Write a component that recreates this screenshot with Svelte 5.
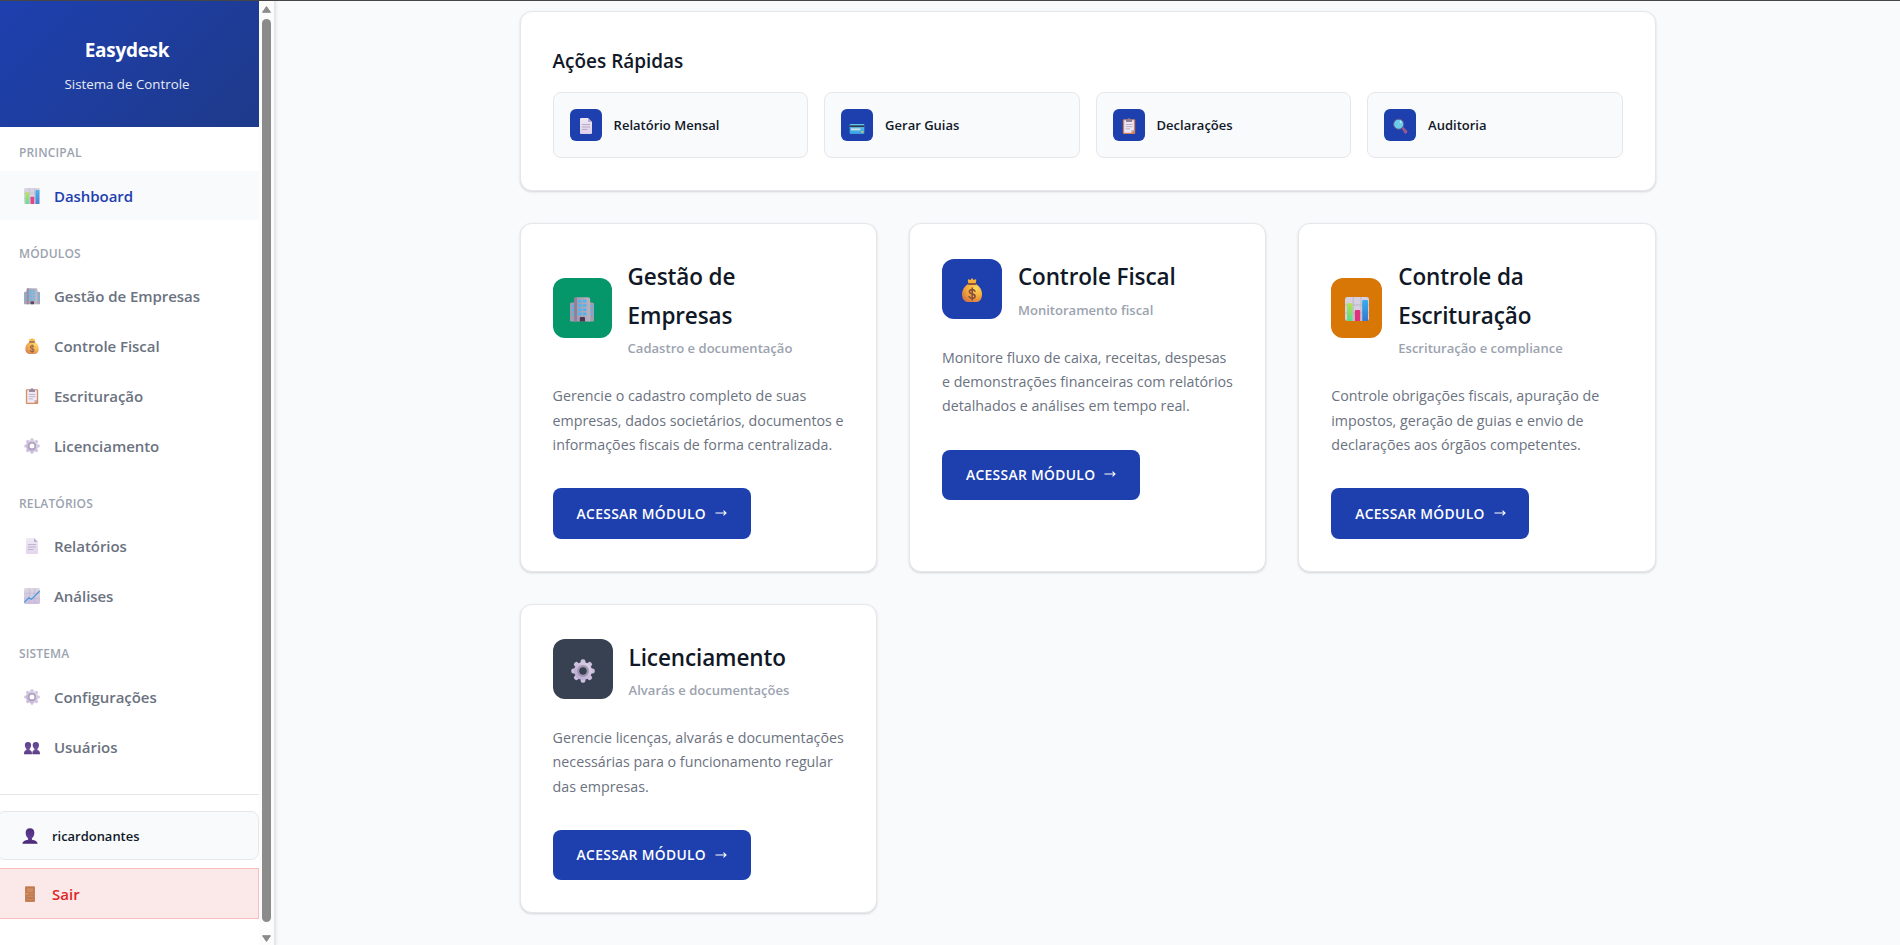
<script>
  const sections = [
    { title: 'PRINCIPAL', items: [{ icon: 'chart', label: 'Dashboard', active: true }] },
    {
      title: 'MÓDULOS',
      items: [
        { icon: 'building', label: 'Gestão de Empresas' },
        { icon: 'money', label: 'Controle Fiscal' },
        { icon: 'clipboard', label: 'Escrituração' },
        { icon: 'gear', label: 'Licenciamento' }
      ]
    },
    {
      title: 'RELATÓRIOS',
      items: [
        { icon: 'page', label: 'Relatórios' },
        { icon: 'trend', label: 'Análises' }
      ]
    },
    {
      title: 'SISTEMA',
      items: [
        { icon: 'gear', label: 'Configurações' },
        { icon: 'users', label: 'Usuários' }
      ]
    }
  ];

  const quick = [
    { icon: 'page', label: 'Relatório Mensal' },
    { icon: 'card', label: 'Gerar Guias' },
    { icon: 'clipboard', label: 'Declarações' },
    { icon: 'search', label: 'Auditoria' }
  ];

  const modules = [
    {
      icon: 'building', tone: 'green',
      title: ['Gestão de', 'Empresas'],
      sub: 'Cadastro e documentação',
      text: ['Gerencie o cadastro completo de suas', 'empresas, dados societários, documentos e', 'informações fiscais de forma centralizada.']
    },
    {
      icon: 'money', tone: 'blue',
      title: ['Controle Fiscal'],
      sub: 'Monitoramento fiscal',
      text: ['Monitore fluxo de caixa, receitas, despesas', 'e demonstrações financeiras com relatórios', 'detalhados e análises em tempo real.']
    },
    {
      icon: 'chart', tone: 'orange',
      title: ['Controle da', 'Escrituração'],
      sub: 'Escrituração e compliance',
      text: ['Controle obrigações fiscais, apuração de', 'impostos, geração de guias e envio de', 'declarações aos órgãos competentes.']
    },
    {
      icon: 'gear', tone: 'slate',
      title: ['Licenciamento'],
      sub: 'Alvarás e documentações',
      text: ['Gerencie licenças, alvarás e documentações', 'necessárias para o funcionamento regular', 'das empresas.']
    }
  ];
</script>

{#snippet emoji(name)}
  <svg class="emoji" viewBox="0 0 24 24" aria-hidden="true">
    {#if name === 'chart'}
      <rect width="24" height="24" rx="2.4" fill="#d5cfdf" />
      <path d="M8.2 0V24M16 0V24M0 8H24M0 16H24" stroke="#b9b1c6" stroke-width=".9" />
      <path d="M2 7.2a1 1 0 0 1 1-1H6.600a1 1 0 0 1 1 1V24H2.400A2 2 0 0 1 2 23.900Z" fill="url(#g-green)" />
      <path d="M9.800 14a1 1 0 0 1 1-1H14.200a1 1 0 0 1 1 1V24H9.800Z" fill="#e0327c" />
      <path d="M17.200 4a1 1 0 0 1 1-1H22a1 1 0 0 1 1 1V24H17.200Z" fill="url(#g-blue)" />
    {:else if name === 'building'}
      <path d="M0 7a1.500 1.500 0 0 1 1.500-1.500H5V24.500H1a1 1 0 0 1-1-1ZM24 7a1.500 1.500 0 0 0-1.500-1.500H19V24.500H23a1 1 0 0 0 1-1Z" fill="#a49bb0" />
      <path d="M4 2.500A2.200 2.200 0 0 1 6.200.3H18A2.200 2.200 0 0 1 20.200 2.500V24.500H4Z" fill="url(#g-wall)" />
      <path d="M4 2.500A2.200 2.200 0 0 1 6.200.3H7V24.500H4Z" fill="#8c8299" />
      <path d="M8.300 3h3.300v2.600H8.300ZM13 3h3.300v2.600H13ZM8.300 7.200h3.300v2.600H8.300ZM13 7.200h3.300v2.600H13ZM8.300 11.400h3.300V14H8.300ZM13 11.400h3.300V14H13ZM8.300 15.600h3.300v2.600H8.300ZM13 15.600h3.300v2.600H13ZM1.800 8h1.800v2.500H1.800ZM1.800 12h1.800v2.500H1.800ZM1.800 16h1.800v2.500H1.800ZM21 8h1.800v2.500H21ZM21 12h1.800v2.500H21ZM21 16h1.800v2.500H21Z" fill="#42b9f5" />
      <path d="M9.800 24.500V21a1 1 0 0 1 1-1H14a1 1 0 0 1 1 1V24.500Z" fill="#4b3553" />
    {:else if name === 'money'}
      <path d="M8.500 6.200 7.800 2.300a.9.900 0 0 1 1.200-.9l1.600.5L11.500.5a.7.700 0 0 1 1.100 0l.9 1.400 1.600-.5a.9.900 0 0 1 1.200.9L15.600 6.200Z" fill="#f7b13b" />
      <path d="M8.500 5.800C4.500 8.200 2 12 2 16.200 2 21 4.500 24 8 24H16.200C19.700 24 22 21 22 16.200 22 12 19.600 8.200 15.600 5.800Z" fill="url(#g-gold)" />
      <rect x="7.600" y="5" width="9" height="2" rx="1" fill="#8e5740" />
      <path d="M14.900 13.200C14.500 12.100 13.500 11.600 12.200 11.600 10.500 11.600 9.400 12.400 9.400 13.700 9.400 16.700 15.100 15 15.100 18.200 15.100 19.500 13.900 20.400 12.200 20.400 10.600 20.400 9.500 19.700 9.100 18.500M12.200 10V22" fill="none" stroke="#8a5039" stroke-width="1.600" stroke-linecap="round" />
    {:else if name === 'clipboard'}
      <rect x="2.800" y="1.700" width="18.500" height="22.300" rx="1.500" fill="#cf8458" />
      <path d="M4.800 3.500H19.300V18L15.500 22H4.800Z" fill="#efe7f5" />
      <path d="M19.300 18H16.300a.8.800 0 0 0-.8.800V22Z" fill="#bfb2cc" />
      <path d="M7.200 9.700H17M7.200 13H17M7.200 16.300H13.500" stroke="#a9a0b8" stroke-width="1.200" />
      <path d="M7.500 5.300V3.200a1 1 0 0 1 1-1H10A2 2 0 0 1 14 2.200H15.600a1 1 0 0 1 1 1V5.300a.8.800 0 0 1-.8.800H8.300a.8.800 0 0 1-.8-.8Z" fill="#8b8198" />
    {:else if name === 'gear'}
      {#each [0, 45, 90, 135, 180, 225, 270, 315] as a}
        <rect x="9.600" y=".3" width="4.800" height="7" rx="2" fill="#cdbfdf" transform="rotate({a} 12 12)" />
      {/each}
      <circle cx="12" cy="12" r="6.600" fill="none" stroke="url(#g-gear)" stroke-width="4.800" />
      <circle cx="12" cy="12" r="4.900" fill="none" stroke="#a195b1" stroke-width="2.200" />
    {:else if name === 'page'}
      <path d="M3 1.500A1.500 1.500 0 0 1 4.500 0H15L21 6V22.500A1.500 1.500 0 0 1 19.500 24H4.500A1.500 1.500 0 0 1 3 22.500Z" fill="url(#g-page)" />
      <path d="M15 0 21 6H16.200A1.200 1.200 0 0 1 15 4.800Z" fill="#b8a9c9" />
      <path d="M6.500 9.800H17.500M6.500 13.500H17.500M6.500 17.200H13.500" stroke="#a9a0b8" stroke-width="1.200" stroke-linecap="round" />
    {:else if name === 'trend'}
      <rect width="24" height="24" rx="2.400" fill="url(#g-grid)" />
      <path d="M8 0V24M16 0V24M0 8H24M0 16H24" stroke="#b9adca" stroke-width=".9" />
      <path d="M.5 21.500 7.200 14.800 11.200 17 23.500 4.500" fill="none" stroke="#2f8fdb" stroke-width="1.900" />
    {:else if name === 'users'}
      <g fill="url(#g-user)">
        <path d="M6 4.500c3 0 4.700 1.900 4.700 4.600 0 2.400-.8 4.500-2.300 5.800v1.700c2.700.5 3.600 2.300 3.600 6.400H0c0-4.100.9-5.900 3.600-6.400v-1.700C2.100 13.600 1.300 11.500 1.300 9.100 1.300 6.400 3 4.500 6 4.500Z" />
        <path d="M17.700 4.500c3 0 4.800 1.900 4.800 4.600 0 2.400-.8 4.500-2.400 5.800v1.700c2.900.5 3.900 2.300 3.900 6.400H12.500c0-4.100.5-5.900 3.100-6.400v-1.700C14 13.600 13 11.500 13 9.100 13 6.400 14.700 4.500 17.700 4.500Z" />
      </g>
    {:else if name === 'user'}
      <path d="M12 .2c4.500 0 6.500 2.800 6.500 6.700 0 4.300-1.400 7-3.600 8.500v2.200c5.100.6 8.100 2.300 8.600 6.200H.5c.5-3.900 3.500-5.600 8.600-6.200v-2.200C6.900 13.900 5.500 11.200 5.500 6.900 5.500 3 7.500.2 12 .2Z" fill="url(#g-user)" />
    {:else if name === 'door'}
      <rect x="4.500" y=".5" width="15" height="23.500" rx="1.200" fill="#c98458" />
      <path d="M6.500 2.500H17.500V10H6.500ZM6.500 14H17.500V17H6.500ZM6.500 19H17.500V22H6.500Z" fill="#cf8a60" stroke="#b06f49" stroke-width=".8" />
      <path d="M5.500 11.700H9" stroke="#f2ae4a" stroke-width="1.200" />
    {:else if name === 'card'}
      <rect x="1" y="9" width="22" height="15" rx="1.500" fill="url(#g-card)" />
      <rect x="1" y="11" width="22" height="2.600" fill="#3d3447" />
      <rect x="3" y="15.500" width="14" height="3" fill="#c9dce8" />
      <rect x="18.500" y="19.500" width="3" height="2.600" rx=".5" fill="#e7c944" />
    {:else if name === 'search'}
      <path d="M14.500 15.500 17 13.500 22.500 19.300a2 2 0 0 1 0 2.700l-.8.800a2 2 0 0 1-2.800 0Z" fill="#9b5a8e" />
      <circle cx="10" cy="9.300" r="7.600" fill="#6ccdea" stroke="#63558a" stroke-width="1.500" />
      <ellipse cx="13" cy="6" rx="1.300" ry="1.800" fill="#b6effb" />
    {/if}
  </svg>
{/snippet}

<svg class="defs" width="0" height="0" aria-hidden="true">
  <defs>
    <linearGradient id="g-green" x1="0" y1="0" x2="0" y2="1"><stop stop-color="#b4e04f" /><stop offset="1" stop-color="#55dc92" /></linearGradient>
    <linearGradient id="g-blue" x1="0" y1="0" x2="0" y2="1"><stop stop-color="#34aef0" /><stop offset="1" stop-color="#3a77cf" /></linearGradient>
    <linearGradient id="g-wall"><stop stop-color="#9f96ab" /><stop offset="1" stop-color="#b9b2c0" /></linearGradient>
    <radialGradient id="g-gold" cx=".7" cy=".25" r=".9"><stop stop-color="#ffd75a" /><stop offset=".5" stop-color="#f5ab3e" /><stop offset="1" stop-color="#cf6e42" /></radialGradient>
    <linearGradient id="g-gear" x1="1" y1="0" x2="0" y2="1"><stop stop-color="#dad0e6" /><stop offset="1" stop-color="#bca9d3" /></linearGradient>
    <linearGradient id="g-page" x1="0" y1="0" x2="0" y2="1"><stop stop-color="#efe8f4" /><stop offset="1" stop-color="#dfd0ec" /></linearGradient>
    <linearGradient id="g-grid" x1="0" y1="0" x2="0" y2="1"><stop stop-color="#d8d3df" /><stop offset="1" stop-color="#c9b8dc" /></linearGradient>
    <linearGradient id="g-user" x1="0" y1="0" x2="0" y2="1"><stop stop-color="#4b2f7a" /><stop offset=".6" stop-color="#5f3c94" /><stop offset="1" stop-color="#472671" /></linearGradient>
    <linearGradient id="g-card" x1="0" y1="0" x2="0" y2="1"><stop stop-color="#58cdf0" /><stop offset="1" stop-color="#3b9ee2" /></linearGradient>
  </defs>
</svg>

<div class="page">
  <aside>
    <div class="side">
      <header>
        <h1>Easydesk</h1>
        <p>Sistema de Controle</p>
      </header>
      <nav>
        {#each sections as s}
          <section>
            <h2>{s.title}</h2>
            {#each s.items as item}
              <a class:active={item.active}>{@render emoji(item.icon)}<span>{item.label}</span></a>
            {/each}
          </section>
        {/each}
      </nav>
      <div class="foot">
        <div class="user">{@render emoji('user')}<span>ricardonantes</span></div>
        <div class="exit">{@render emoji('door')}<span>Sair</span></div>
      </div>
    </div>
    <div class="scroll">
      <svg viewBox="0 0 9 7"><path d="M4.500 0.600 8.500 6.300H.5Z" fill="#8b8b8b" stroke="#8b8b8b" stroke-linejoin="round" /></svg>
      <div class="thumb"></div>
      <svg viewBox="0 0 9 7"><path d="M4.500 6.400 8.500.7H.5Z" fill="#8b8b8b" stroke="#8b8b8b" stroke-linejoin="round" /></svg>
    </div>
  </aside>

  <main>
    <div class="card quick">
      <h2>Ações Rápidas</h2>
      <div class="quick-grid">
        {#each quick as q}
          <div class="action"><i>{@render emoji(q.icon)}</i><span>{q.label}</span></div>
        {/each}
      </div>
    </div>

    <div class="modules">
      {#each modules as m}
        <article class="card">
          <div class="head">
            <div class="tile {m.tone}">{@render emoji(m.icon)}</div>
            <div>
              <h3>{#each m.title as line}<span>{line}</span>{/each}</h3>
              <p class="sub">{m.sub}</p>
            </div>
          </div>
          <p class="text">{#each m.text as line}<span>{line}</span>{/each}</p>
          <button><span>ACESSAR MÓDULO</span><svg class="arrow" viewBox="0 0 12 8"><path d="M.5 4H11M8.500 1.700 11 4 8.500 6.300" fill="none" stroke="#fff" stroke-width="1.100" /></svg></button>
        </article>
      {/each}
    </div>
  </main>
</div>

<style>
  :global(body) {
    background: #f8fafc;
    overflow: hidden;
  }
  .defs { position: absolute; }
  h1, h2, h3, p { margin: 0; }
  .page {
    box-sizing: border-box;
    height: 945px;
    display: flex;
    border-top: 1px solid #454545;
    font-family: 'Open Sans', 'Noto Sans', sans-serif;
    color: #111827;
    background: #f8fafc;
    white-space: nowrap;
    overflow: hidden;
  }
  .emoji { display: block; overflow: visible; flex: none; width: 16px; height: 16px; }
  aside {
    flex: none;
    box-sizing: border-box;
    width: 276px;
    display: flex;
    background: #fff;
    border-right: 2px solid #e5e7eb;
    box-shadow: 1px 0 3px rgba(0, 0, 0, 0.06);
  }
  .side { width: 259px; overflow: hidden; }
  header {
    box-sizing: border-box;
    height: 126px;
    padding: 32px 5px 0 0;
    text-align: center;
    color: #fff;
    background: linear-gradient(135deg, #1e40af, #1e3a8a);
  }
  h1 { font-size: 19px; line-height: 34px; font-weight: 700; letter-spacing: -0.3px; }
  header p { margin-top: 6px; font-size: 13.300px; line-height: 22px; opacity: 0.9; }
  nav { padding-top: 8px; }
  section { margin-bottom: 15.600px; }
  nav h2 {
    padding-left: 19px;
    font-size: 12px;
    line-height: 36px;
    font-weight: 600;
    letter-spacing: 0.15px;
    color: #9ca3af;
  }
  nav a {
    display: flex;
    align-items: center;
    gap: 14px;
    height: 49px;
    margin-bottom: 0.850px;
    padding-left: 24px;
    font-size: 15px;
    font-weight: 600;
    letter-spacing: -0.050px;
    color: #6b7280;
  }
  nav a .emoji { opacity: 0.9; }
  nav a.active { background: #f8fafc; color: #1e40af; }
  .foot { margin-top: 23px; padding-top: 16px; border-top: 1px solid #e5e7eb; }
  .user, .exit {
    box-sizing: border-box;
    display: flex;
    align-items: center;
    gap: 14px;
    margin-left: -3px;
    padding-left: 24px;
    font-weight: 600;
  }
  .user {
    height: 49px;
    border: 1px solid #e5e7eb;
    border-radius: 8px;
    background: #f8fafc;
    font-size: 12.950px;
  }
  .exit {
    height: 51px;
    margin-top: 8px;
    border: 1px solid #f6bebe;
    background: #fbe8e8;
    color: #dc2626;
    font-size: 15px;
  }
  .scroll {
    width: 15px;
    display: flex;
    flex-direction: column;
    align-items: center;
    padding: 5px 0 3px;
    box-sizing: border-box;
    background: #fcfcfc;
  }
  .scroll svg { width: 9px; height: 7px; flex: none; }
  .thumb { flex: 1; width: 9px; margin: 6px 0 13px; border-radius: 5px; background: #8b8b8b; }

  main { width: 1136px; margin: 10px 0 0 243.600px; }
  .card {
    box-sizing: border-box;
    padding: 32px;
    border: 1px solid #e5e7eb;
    border-radius: 12px;
    background: #fff;
    box-shadow: 0 1px 3px rgba(0, 0, 0, 0.1), 0 1px 2px rgba(0, 0, 0, 0.06);
  }
  .quick { height: 180.400px; }
  .quick h2 { font-size: 18.950px; line-height: 35px; font-weight: 600; }
  .quick-grid { display: grid; grid-template-columns: repeat(4, 1fr); gap: 16px; margin-top: 13px; }
  .action {
    display: flex;
    align-items: center;
    gap: 12px;
    height: 64px;
    padding-left: 16px;
    border: 1px solid #e5e7eb;
    border-radius: 8px;
    background: #f8fafc;
    font-size: 13px;
    font-weight: 600;
  }
  .action i {
    width: 32px;
    height: 32px;
    display: grid;
    place-items: center;
    padding-top: 2px;
    box-sizing: border-box;
    border-radius: 6px;
    background: #1e40af;
  }
  .modules {
    display: grid;
    grid-template-columns: repeat(3, 1fr);
    gap: 32px;
    margin-top: 32px;
  }
  .head { display: flex; align-items: center; gap: 16px; margin-bottom: 24.700px; }
  .tile {
    flex: none;
    box-sizing: border-box;
    width: 60px;
    height: 60px;
    padding-top: 3px;
    display: grid;
    place-items: center;
    border-radius: 12px;
  }
  .tile .emoji { width: 24px; height: 24px; }
  .green { background: #059669; width: 59px; }
  .blue { background: #1e40af; }
  .orange { background: #d97706; width: 51px; }
  .slate { background: #374151; }
  h3 { padding-top: 2px; font-size: 22.500px; line-height: 38.600px; font-weight: 600; letter-spacing: -0.120px; }
  h3 span, .text span { display: block; }
  .sub { margin-top: 2.600px; font-size: 13.050px; line-height: 21.400px; font-weight: 600; color: #9ca3af; }
  .text { font-size: 14.250px; line-height: 24.300px; color: #6b7280; }
  button {
    display: flex;
    align-items: center;
    gap: 9px;
    box-sizing: border-box;
    width: 198px;
    height: 50.400px;
    margin-top: 31.200px;
    padding: 0 0 1px 24px;
    border: 0;
    border-radius: 8px;
    background: #1e40af;
    color: #fff;
    font: 600 13.800px 'Open Sans', sans-serif;
    letter-spacing: 0.350px;
  }
  .arrow { width: 12px; height: 8px; }
</style>
